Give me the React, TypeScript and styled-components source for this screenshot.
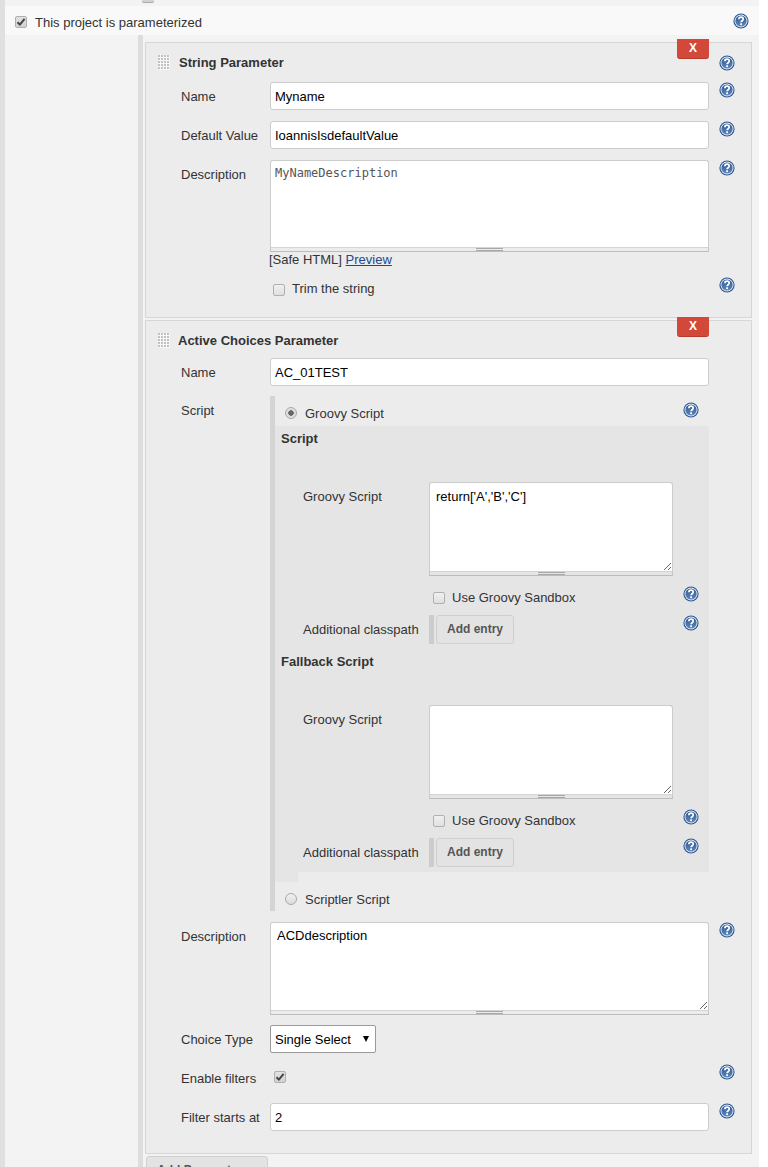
import React from 'react'
import styled, { createGlobalStyle } from 'styled-components'

const GlobalStyle = createGlobalStyle`
  html, body {
    margin: 0;
    padding: 0;
    background: #ffffff;
  }
  body {
    font-family: "Liberation Sans", Arial, sans-serif;
    font-size: 13px;
    color: #333333;
  }
`

const Page = styled.div`
  width: 768px;
  height: 1167px;
  overflow: hidden;
`
const Main = styled.div`
  width: 754px;
  margin-left: 5px;
  height: 1167px;
  background: #f3f3f3;
  box-shadow: -5px 0 0 #e0e0e0;
`
const TopStrip = styled.div`
  height: 6px;
  overflow: hidden;
  padding-left: 137px;
`
const ClippedBox = styled.div`
  width: 12px;
  height: 2px;
  background: #d2d2d2;
  border-bottom: 1px solid #a8a8a8;
  border-radius: 0 0 2px 2px;
`
const ProjectRow = styled.div`
  display: flex;
  align-items: center;
  height: 29px;
  background: #f9f9f9;
  padding: 0 10px 0 10px;
`
const ProjectText = styled.span`
  margin-left: 8px;
  padding-top: 4px;
  flex: 1;
`
const ParamList = styled.div`
  margin-left: 133px;
  margin-right: 7px;
  padding: 7px 0 0 2px;
  border-left: 5px solid #dddddd;
  display: flex;
  flex-direction: column;
  gap: 2px;
`
const Panel = styled.div`
  position: relative;
  background: #ececec;
  border: 1px solid #d6d6d6;
  display: flex;
  flex-direction: column;
`
const DeleteButton = styled.div`
  position: absolute;
  top: -4px;
  right: 42px;
  width: 32px;
  height: 20px;
  box-sizing: border-box;
  background: #d24939;
  border-bottom: 1px solid #b83a2c;
  border-radius: 0 0 3px 3px;
  color: #ffffff;
  font-weight: bold;
  font-size: 12px;
  line-height: 19px;
  text-align: center;
`
const Header = styled.div<{ $gap: number }>`
  display: flex;
  align-items: center;
  height: 20px;
  margin-top: 9px;
  padding-left: 12px;
  gap: ${p => p.$gap}px;
`
const DragHandle = styled.div`
  width: 12px;
  height: 15px;
  background-color: #f8f8f8;
  background-image:
    repeating-linear-gradient(to right, transparent 0 2px, #f8f8f8 2px 3px),
    repeating-linear-gradient(to bottom, #c2c2c2 0 2px, #f8f8f8 2px 3px);
`
const Title = styled.div`
  font-weight: bold;
  flex: 0 0 auto;
  width: 498px;
`
const Row = styled.div<{ $top: number }>`
  display: flex;
  align-items: flex-start;
  margin-top: ${p => p.$top}px;
  padding-left: 35px;
`
const Label = styled.div`
  width: 89px;
  flex: none;
  line-height: 30px;
  margin-bottom: -2px;
`
const Field = styled.div`
  width: 439px;
  flex: none;
`
const TextInput = styled.input`
  display: block;
  width: 100%;
  height: 28px;
  box-sizing: border-box;
  border: 1px solid #cccccc;
  border-radius: 3px;
  padding: 0 5px 0 4px;
  background: #ffffff;
  font: 13px "Liberation Sans", Arial, sans-serif;
  color: #000000;
  outline: none;
`
const TextArea = styled.textarea<{ $height: number; $mono?: boolean; $resize?: boolean; $padTop?: number }>`
  display: block;
  width: 100%;
  height: ${p => p.$height}px;
  box-sizing: border-box;
  border: 1px solid #cccccc;
  border-bottom: none;
  border-radius: 3px 3px 0 0;
  padding: ${p => p.$padTop ?? 5}px ${p => (p.$mono ? 4 : 6)}px;
  background: #ffffff;
  font: ${p => (p.$mono ? '12px "DejaVu Sans Mono", monospace' : '13px "Liberation Sans", Arial, sans-serif')};
  color: ${p => (p.$mono ? '#555555' : '#000000')};
  resize: ${p => (p.$resize ? 'vertical' : 'none')};
  outline: none;
`
const GripBar = styled.div`
  height: 5px;
  box-sizing: border-box;
  border: 1px solid #c6c6c6;
  border-top-color: #d4d4d4;
  border-bottom-color: #bcbcbc;
  display: flex;
  justify-content: center;
  &::after {
    content: '';
    width: 27px;
    height: 3px;
    border-top: 1px solid #a8a8a8;
    border-bottom: 1px solid #a8a8a8;
    box-sizing: border-box;
  }
`
const SafeHtml = styled.div`
  line-height: 16px;
  margin: 0 0 0 -1px;
  height: 15px;
  & a {
    color: #204a87;
    text-decoration: underline;
  }
`
const CheckRow = styled.div<{ $pad: number }>`
  display: flex;
  align-items: flex-start;
  height: 24px;
  padding-left: ${p => p.$pad}px;
`
const CheckText = styled.span`
  margin-left: 7px;
  line-height: 24px;
`
const BoxMark = styled.span<{ $top: number; $on?: boolean }>`
  display: inline-flex;
  align-items: center;
  justify-content: center;
  flex: none;
  width: 12px;
  height: 12px;
  box-sizing: border-box;
  margin-top: ${p => p.$top}px;
  border: 1px solid #b0b0b0;
  border-radius: 2px;
  background: ${p => (p.$on ? 'linear-gradient(#e2e2e2, #d2d2d2)' : 'linear-gradient(#f0f0f0, #e0e0e0)')};
`
const RadioMark = styled.span<{ $on?: boolean }>`
  flex: none;
  width: 12px;
  height: 12px;
  box-sizing: border-box;
  margin: 0 8px 0 10px;
  border: 1px solid #a9a9a9;
  border-radius: 50%;
  background: ${p => (p.$on ? 'radial-gradient(circle, #666 0 2.5px, #dedede 3px)' : 'linear-gradient(#f0f0f0, #dcdcdc)')};
`
const HelpSvg = styled.svg<{ $top?: number; $left?: number }>`
  flex: none;
  display: block;
  margin-top: ${p => p.$top ?? 0}px;
  margin-left: ${p => p.$left ?? 10}px;
`
const ScriptBlock = styled.div`
  width: 439px;
  height: 515px;
  box-sizing: border-box;
  border-left: 5px solid #d4d4d4;
  display: flex;
  flex-direction: column;
  flex: none;
`
const RadioRow = styled.div<{ $height: number }>`
  display: flex;
  align-items: center;
  height: 18px;
  padding-top: 8px;
  margin-bottom: ${p => p.$height - 26}px;
`
const RadioText = styled.span`
  width: 378px;
`
const GreyBox = styled.div`
  background: #e5e5e5;
  height: 446px;
  box-sizing: border-box;
  padding-top: 3px;
`
const GreyTail = styled.div`
  width: 23px;
  height: 10px;
  background: #e5e5e5;
`
const SubHeading = styled.div<{ $top: number }>`
  font-weight: bold;
  line-height: 20px;
  padding-left: 6px;
  margin-top: ${p => p.$top}px;
`
const SubRow = styled.div<{ $top: number }>`
  display: flex;
  align-items: flex-start;
  margin-top: ${p => p.$top}px;
  padding-left: 28px;
`
const SubLabel = styled.div`
  width: 126px;
  flex: none;
  line-height: 30px;
  margin-bottom: -2px;
`
const SubField = styled.div`
  width: 244px;
  flex: none;
`
const EntryWrap = styled.div`
  display: flex;
  height: 29px;
  border-left: 5px solid #cccccc;
  padding-left: 2px;
`
const EntryButton = styled.div`
  width: 78px;
  box-sizing: border-box;
  border: 1px solid #d0d0d0;
  border-radius: 3px;
  background: #e3e3e3;
  color: #555555;
  font-weight: bold;
  font-size: 12px;
  line-height: 26px;
  text-align: center;
`
const SelectWrap = styled.div`
  position: relative;
  width: 106px;
  height: 28px;
  &::after {
    content: '';
    position: absolute;
    top: 11px;
    right: 7px;
    border-left: 3.5px solid transparent;
    border-right: 3.5px solid transparent;
    border-top: 6px solid #000000;
  }
`
const Select = styled.select`
  appearance: none;
  display: block;
  width: 100%;
  height: 100%;
  box-sizing: border-box;
  border: 1px solid #999999;
  border-radius: 2px;
  padding: 0 4px;
  background: #ffffff;
  font: 13px "Liberation Sans", Arial, sans-serif;
  color: #000000;
  outline: none;
`
const InlineCheck = styled.div`
  height: 28px;
  padding-left: 4px;
`
const AddButton = styled.div`
  width: 122px;
  height: 30px;
  box-sizing: border-box;
  margin: 0 0 0 1px;
  padding-left: 10px;
  border: 1px solid #d0d0d0;
  border-radius: 3px;
  background: #e3e3e3;
  color: #555555;
  font-weight: bold;
  font-size: 12px;
  line-height: 26px;
`

const Help: React.FC<{ top?: number; left?: number }> = ({ top, left }) => (
  <HelpSvg $top={top} $left={left} width="16" height="16" viewBox="0 0 16 16">
    <defs>
      <linearGradient id="helpFill" x1="0" y1="0" x2="0" y2="1">
        <stop offset="0" stopColor="#2d5a96" />
        <stop offset="1" stopColor="#5f87bb" />
      </linearGradient>
    </defs>
    <circle cx="8" cy="8" r="7.6" fill="#2c5691" />
    <circle cx="8" cy="8" r="6.5" fill="#e8eef6" />
    <circle cx="8" cy="8" r="5.6" fill="url(#helpFill)" />
    <path d="M5.9 6.2c0-1.3 1-2 2.2-2s2.1.8 2.1 1.9c0 1.6-2.1 1.6-2.1 3.2" fill="none" stroke="#ffffff" strokeWidth="1.7" />
    <rect x="7.2" y="10.3" width="1.8" height="1.8" fill="#ffffff" />
  </HelpSvg>
)

const Check: React.FC<{ checked?: boolean; top?: number }> = ({ checked, top = 0 }) => (
  <BoxMark $top={top} $on={checked}>
    {checked && (
      <svg width="10" height="10" viewBox="0 0 10 10">
        <path d="M1.5 5.2l2.4 2.4L8.6 1.8" fill="none" stroke="#444444" strokeWidth="2" />
      </svg>
    )}
  </BoxMark>
)

const Grip: React.FC = () => <GripBar />

const GroovyEditor: React.FC<{ heading: string; headingTop: number; code: string }> = ({ heading, headingTop, code }) => (
  <>
    <SubHeading $top={headingTop}>{heading}</SubHeading>
    <SubRow $top={33}>
      <SubLabel>Groovy Script</SubLabel>
      <SubField>
        <TextArea $height={89} $resize $padTop={6} readOnly value={code} />
        <Grip />
      </SubField>
    </SubRow>
    <SubRow $top={10}>
      <SubLabel />
      <SubField>
        <CheckRow $pad={4}>
          <Check top={6} />
          <CheckText>Use Groovy Sandbox</CheckText>
        </CheckRow>
      </SubField>
      <Help />
    </SubRow>
    <SubRow $top={5}>
      <SubLabel>Additional classpath</SubLabel>
      <SubField>
        <EntryWrap>
          <EntryButton>Add entry</EntryButton>
        </EntryWrap>
      </SubField>
      <Help top={0} />
    </SubRow>
  </>
)

export default function App() {
  return (
    <Page>
      <GlobalStyle />
      <Main>
        <TopStrip>
          <ClippedBox />
        </TopStrip>
        <ProjectRow>
          <Check checked top={2} />
          <ProjectText>This project is parameterized</ProjectText>
          <Help />
        </ProjectRow>
        <ParamList>
          <Panel>
            <DeleteButton>X</DeleteButton>
            <Header $gap={9}>
              <DragHandle />
              <Title>String Parameter</Title>
              <Help top={2} left={33} />
            </Header>
            <Row $top={10}>
              <Label>Name</Label>
              <Field><TextInput readOnly value="Myname" /></Field>
              <Help />
            </Row>
            <Row $top={11}>
              <Label>Default Value</Label>
              <Field><TextInput readOnly value="IoannisIsdefaultValue" /></Field>
              <Help />
            </Row>
            <Row $top={11}>
              <Label>Description</Label>
              <Field>
                <TextArea $height={87} $mono readOnly value="MyNameDescription" />
                <Grip />
                <SafeHtml>[Safe HTML] <a href="#preview">Preview</a></SafeHtml>
              </Field>
              <Help />
            </Row>
            <Row $top={10}>
              <Label />
              <Field>
                <CheckRow $pad={3}>
                  <Check top={7} />
                  <CheckText>Trim the string</CheckText>
                </CheckRow>
              </Field>
              <Help />
            </Row>
            <Row $top={16} />
          </Panel>
          <Panel>
            <DeleteButton>X</DeleteButton>
            <Header $gap={8}>
              <DragHandle />
              <Title>Active Choices Parameter</Title>
            </Header>
            <Row $top={8}>
              <Label>Name</Label>
              <Field><TextInput readOnly value="AC_01TEST" /></Field>
            </Row>
            <Row $top={10}>
              <Label>Script</Label>
              <ScriptBlock>
                <RadioRow $height={30}>
                  <RadioMark $on />
                  <RadioText>Groovy Script</RadioText>
                  <Help top={-6} left={0} />
                </RadioRow>
                <GreyBox>
                  <GroovyEditor heading="Script" headingTop={0} code="return['A','B','C']" />
                  <GroovyEditor heading="Fallback Script" headingTop={8} code="" />
                </GreyBox>
                <GreyTail />
                <RadioRow $height={29}>
                  <RadioMark />
                  <RadioText>Scriptler Script</RadioText>
                </RadioRow>
              </ScriptBlock>
            </Row>
            <Row $top={11}>
              <Label>Description</Label>
              <Field>
                <TextArea $height={88} $resize readOnly value="ACDdescription" />
                <Grip />
              </Field>
              <Help />
            </Row>
            <Row $top={10}>
              <Label>Choice Type</Label>
              <Field>
                <SelectWrap>
                  <Select defaultValue="single">
                    <option value="single">Single Select</option>
                  </Select>
                </SelectWrap>
              </Field>
            </Row>
            <Row $top={11}>
              <Label>Enable filters</Label>
              <Field>
                <InlineCheck>
                  <Check checked top={7} />
                </InlineCheck>
              </Field>
              <Help />
            </Row>
            <Row $top={11}>
              <Label>Filter starts at</Label>
              <Field><TextInput readOnly value="2" /></Field>
              <Help />
            </Row>
            <Row $top={22} />
          </Panel>
          <AddButton>Add Parameter</AddButton>
        </ParamList>
      </Main>
    </Page>
  )
}
